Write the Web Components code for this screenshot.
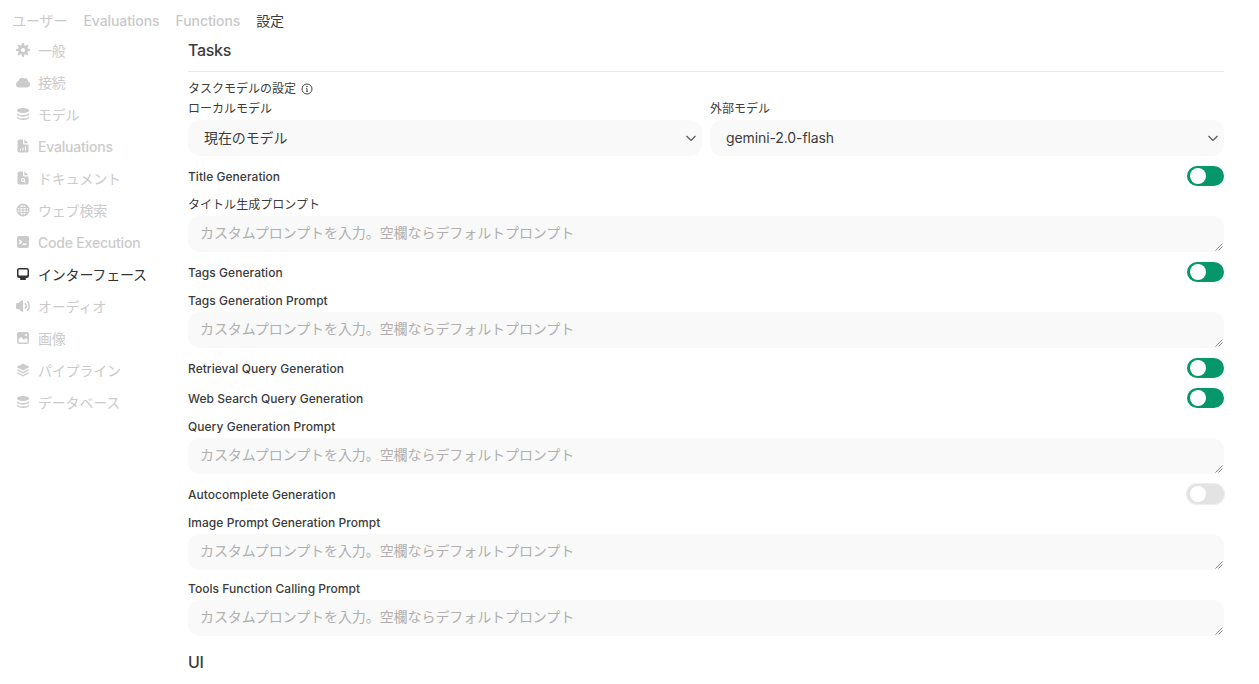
<!DOCTYPE html>
<html lang="ja">
<head>
<meta charset="utf-8">
<title>設定</title>
<style>
    html, body {
        margin: 0;
        height: 100%;
        overflow: hidden;
        background: #fff;
        color: #333;
        font-family: Inter, "Noto Sans CJK JP", sans-serif;
    }
</style>
</head>
<body>
<settings-page></settings-page>
<script>
const FONT_STACK = 'Inter, "Noto Sans CJK JP", sans-serif';
const PLACEHOLDER = 'カスタムプロンプトを入力。空欄ならデフォルトプロンプト';

// Sidebar icons, all on a 16x16 box
const ICONS = {
    cog: '<path fill-rule="evenodd" d="M6.955 1.45A.5.5 0 0 1 7.452 1h1.096a.5.5 0 0 1 .497.45l.17 1.699c.484.12.94.312 1.356.562l1.321-1.081a.5.5 0 0 1 .67.033l.774.775a.5.5 0 0 1 .034.67l-1.08 1.32c.25.417.44.873.561 1.357l1.699.17a.5.5 0 0 1 .45.497v1.096a.5.5 0 0 1-.45.497l-1.699.17c-.12.484-.312.94-.562 1.356l1.082 1.322a.5.5 0 0 1-.034.67l-.774.774a.5.5 0 0 1-.67.033l-1.322-1.08c-.416.25-.872.44-1.356.561l-.17 1.699a.5.5 0 0 1-.497.45H7.452a.5.5 0 0 1-.497-.45l-.17-1.699a4.973 4.973 0 0 1-1.356-.562L4.108 13.37a.5.5 0 0 1-.67-.033l-.774-.775a.5.5 0 0 1-.034-.67l1.08-1.32a4.971 4.971 0 0 1-.561-1.357l-1.699-.17A.5.5 0 0 1 1 8.548V7.452a.5.5 0 0 1 .45-.497l1.699-.17c.12-.484.312-.94.562-1.356L2.629 4.107a.5.5 0 0 1 .034-.67l.774-.774a.5.5 0 0 1 .67-.033L5.43 3.71a4.97 4.97 0 0 1 1.356-.561l.17-1.699ZM6 8c0 .538.212 1.026.558 1.385l.057.057a2 2 0 0 0 2.828-2.828l-.058-.056A2 2 0 0 0 6 8Z"/>',
    cloud: '<path d="M1 10.2A3.3 3.3 0 0 0 4.3 13.5h7.6a3.1 3.1 0 0 0 1.2-6 2.9 2.9 0 0 0-3.7-3.1A3.8 3.8 0 0 0 3.5 7 3.3 3.3 0 0 0 1 10.2Z"/>',
    stack: '<path d="M8 7c3.314 0 6-1.12 6-2.5S11.314 2 8 2 2 3.12 2 4.5 4.686 7 8 7Z"/><path d="M14 6.4C14 7.8 11.3 9 8 9S2 7.8 2 6.4V8c0 1.4 2.7 2.5 6 2.5s6-1.1 6-2.5V6.4Z"/><path d="M14 9.9c0 1.4-2.7 2.6-6 2.6s-6-1.2-6-2.6v1.6C2 12.900 4.700 14 8 14s6-1.100 6-2.500V9.900Z"/>',
    docChart: '<path fill-rule="evenodd" d="M4 1.5A1.5 1.5 0 0 0 2.500 3v10A1.500 1.500 0 0 0 4 14.500h8a1.500 1.500 0 0 0 1.500-1.500V6.500H9.500A1.500 1.500 0 0 1 8 5V1.500H4ZM5 11h1v1.500H5V11Zm2.500-1.500h1v3h-1v-3Zm2.500-1h1v4h-1v-4Z"/><path d="M9.250 1.500v3.500c0 .14.11.25.25.25h4L9.250 1.500Z"/>',
    docSearch: '<path fill-rule="evenodd" d="M4 1.500A1.500 1.500 0 0 0 2.500 3v10A1.500 1.500 0 0 0 4 14.500h8a1.500 1.500 0 0 0 1.500-1.500V6.500H9.500A1.500 1.500 0 0 1 8 5V1.500H4ZM8 8a2 2 0 0 1 1.650 3.130l1.100 1.100-.7.7-1.100-1.100A2 2 0 1 1 8 8Zm0 1a1 1 0 1 0 0 2 1 1 0 0 0 0-2Z"/><path d="M9.250 1.500v3.500c0 .14.11.25.25.25h4L9.250 1.500Z"/>',
    globe: '<path fill-rule="evenodd" d="M8 1.500a6.500 6.500 0 1 0 0 13 6.500 6.500 0 0 0 0-13ZM7.400 3v2H5.300c.45-1.100 1.200-1.850 2.100-2Zm1.200 0c.9.150 1.650.900 2.100 2H8.600V3ZM3 7.400c.05-.5.200-.95.400-1.300h.9c-.07.400-.12.850-.14 1.300H3Zm2.300 0c.02-.450.070-.900.160-1.300H7.400v1.300H5.300Zm3.300 0V6.100h1.940c.09.400.14.850.16 1.300H8.600Zm3.240 0c-.02-.450-.070-.900-.14-1.300h.9c.2.350.35.800.4 1.300h-1.160ZM3 8.600h1.160c.02.450.070.900.14 1.300h-.9c-.2-.350-.35-.800-.4-1.300Zm2.300 0h2.100v1.300H5.460c-.09-.400-.14-.850-.16-1.300Zm3.300 0h2.100c-.02.450-.070.900-.16 1.300H8.600V8.600Zm3.240 0H13c-.05.500-.2.950-.4 1.300h-.9c.07-.400.120-.850.140-1.300ZM5.300 11h2.100v2c-.9-.150-1.650-.900-2.100-2Zm3.300 0h2.100c-.450 1.100-1.200 1.850-2.100 2v-2Z"/>',
    terminal: '<path fill-rule="evenodd" d="M2 4a2 2 0 0 1 2-2h8a2 2 0 0 1 2 2v8a2 2 0 0 1-2 2H4a2 2 0 0 1-2-2V4Zm2.220 1.970a.75.75 0 0 0 0 1.060L5.190 8l-.97.970a.75.750 0 1 0 1.060 1.060l1.500-1.500a.75.75 0 0 0 0-1.060l-1.500-1.500a.75.75 0 0 0-1.060 0ZM8.250 9.500a.75.75 0 0 0 0 1.500h2.500a.75.75 0 0 0 0-1.500h-2.500Z"/>',
    desktop: '<path fill-rule="evenodd" d="M2 4.250A2.250 2.250 0 0 1 4.250 2h7.500A2.250 2.250 0 0 1 14 4.250v5.500A2.250 2.250 0 0 1 11.750 12h-1.312c.1.128.21.248.328.36a.75.75 0 0 1 .234.545v.345a.75.75 0 0 1-.75.75h-4.500a.75.75 0 0 1-.75-.75v-.345a.75.75 0 0 1 .234-.545c.118-.111.228-.232.328-.36H4.250A2.250 2.250 0 0 1 2 9.750v-5.500Zm2.250-.75a.75.75 0 0 0-.75.75v4.500c0 .414.336.75.75.75h7.500a.75.75 0 0 0 .75-.75v-4.500a.75.75 0 0 0-.75-.75h-7.500Z"/>',
    speaker: '<path d="M7.557 2.066A.75.75 0 0 1 8 2.750v10.500a.75.75 0 0 1-1.248.560L3.590 11H2a1 1 0 0 1-1-1V6a1 1 0 0 1 1-1h1.590l3.162-2.810a.75.75 0 0 1 .805-.124Z"/><path d="M12.950 3.050a.75.75 0 1 0-1.060 1.060 5.500 5.500 0 0 1 0 7.780.75.75 0 1 0 1.060 1.060 7 7 0 0 0 0-9.900Z"/><path d="M10.828 5.172a.75.75 0 1 0-1.060 1.060 2.500 2.500 0 0 1 0 3.536.75.75 0 1 0 1.060 1.060 4 4 0 0 0 0-5.656Z"/>',
    photo: '<path fill-rule="evenodd" d="M2 4a2 2 0 0 1 2-2h8a2 2 0 0 1 2 2v8a2 2 0 0 1-2 2H4a2 2 0 0 1-2-2V4Zm10.500 5.707a.5.5 0 0 0-.146-.353l-1-1a.5.5 0 0 0-.708 0L9.354 9.646a.5.5 0 0 1-.708 0L6.354 7.354a.5.5 0 0 0-.708 0l-2 2a.5.5 0 0 0-.146.353V12a.5.5 0 0 0 .5.5h8a.5.5 0 0 0 .5-.5V9.707ZM12 5a1 1 0 1 1-2 0 1 1 0 0 1 2 0Z"/>',
    layers: '<path d="M8 1.500 14.500 5 8 8.500 1.500 5 8 1.500Z"/><path d="M1.500 8 3 7.200l5 2.700 5-2.700 1.500.8L8 11.500 1.500 8Z"/><path d="M1.500 11 3 10.200l5 2.700 5-2.700 1.500.8L8 14.500 1.500 11Z"/>'
};

const NAV_ITEMS = [
    ['cog', '一般'],
    ['cloud', '接続'],
    ['stack', 'モデル'],
    ['docChart', 'Evaluations'],
    ['docSearch', 'ドキュメント'],
    ['globe', 'ウェブ検索'],
    ['terminal', 'Code Execution'],
    ['desktop', 'インターフェース', true],
    ['speaker', 'オーディオ'],
    ['photo', '画像'],
    ['layers', 'パイプライン'],
    ['stack', 'データベース']
];

/**
 * Base class: puts the given html into an open shadow root
 */
class ShadowElement extends HTMLElement {
    render(html) {
        const shadow = this.shadowRoot || this.attachShadow({mode: "open"});
        shadow.innerHTML = html;
    }

    // Japanese labels look better at regular weight than at medium
    get isJapanese() {
        return /[^\x00-\x7f]/.test(this.textContent);
    }
}

/** One tab in the top bar */
class TabLink extends ShadowElement {
    connectedCallback() {
        this.render(`
            <style>
                :host {
                    display: block;
                    font-size: 14px;
                    font-weight: ${this.isJapanese ? 400 : 500};
                    letter-spacing: -0.08px;
                    line-height: 20px;
                    color: #c9c9c9;
                }
                :host([active]) { color: #3a3a3a; }
            </style>
            <slot></slot>
        `);
    }
}

/** One row of the left navigation */
class NavItem extends ShadowElement {
    connectedCallback() {
        const icon = ICONS[this.getAttribute('icon')];
        this.render(`
            <style>
                :host {
                    display: flex;
                    align-items: center;
                    gap: 7px;
                    height: 32px;
                    font-size: 14px;
                    font-weight: ${this.isJapanese ? 400 : 500};
                    letter-spacing: -0.2px;
                    color: #cbcbcb;
                }
                :host([active]) { color: #333; }
                svg { width: 16px; height: 16px; flex: none; fill: currentColor; }
            </style>
            <svg viewBox="0 0 16 16">${icon}</svg>
            <slot></slot>
        `);
    }
}

/** Grey dropdown look-alike with a chevron */
class ModelSelect extends ShadowElement {
    connectedCallback() {
        this.render(`
            <style>
                :host {
                    display: flex;
                    flex-direction: column;
                    gap: 3px;
                    min-width: 0;
                }
                .label { padding-top: 1px; font-size: 12px; line-height: 16px; color: #3c3c3c; }
                .box {
                    display: flex;
                    align-items: center;
                    justify-content: space-between;
                    height: 36px;
                    padding: 0 5px 0 16px;
                    box-sizing: border-box;
                    border-radius: 12px;
                    background: #f9f9f9;
                    font-size: 14px;
                    letter-spacing: -0.1px;
                    color: #3c3c3c;
                }
                span { margin-bottom: 2px; }
                svg { width: 12px; height: 12px; fill: none; stroke: #555; stroke-width: 1.2; }
            </style>
            <div class="label">${this.getAttribute('label')}</div>
            <div class="box">
                <span><slot></slot></span>
                <svg viewBox="0 0 12 12"><path d="M1.500 4 6 8.500 10.500 4"/></svg>
            </div>
        `);
    }
}

/** Label on the left, switch on the right */
class ToggleRow extends ShadowElement {
    connectedCallback() {
        this.render(`
            <style>
                :host {
                    display: flex;
                    align-items: center;
                    justify-content: space-between;
                    height: 20px;
                    font-size: 12px;
                    font-weight: 500;
                    letter-spacing: 0.04px;
                    color: #3c3c3c;
                }
                .switch {
                    display: flex;
                    width: 37px;
                    height: 20px;
                    padding: 2px 3px;
                    box-sizing: border-box;
                    border-radius: 10px;
                    background: #059669;
                }
                :host([off]) .switch { background: #e3e3e3; box-shadow: 0 0 0 1px #eee; }
                .knob { width: 16px; height: 16px; border-radius: 50%; background: #fff; }
            </style>
            <span><slot></slot></span>
            <div class="switch"><div class="knob"></div></div>
        `);
    }
}

/** Label with a prompt textarea look-alike under it */
class PromptField extends ShadowElement {
    connectedCallback() {
        this.render(`
            <style>
                :host {
                    display: flex;
                    flex-direction: column;
                    gap: 3px;
                }
                :host([tight]) { margin-top: -1px; }
                .label {
                    padding-top: 1px;
                    font-size: 12px;
                    line-height: 16px;
                    font-weight: ${this.isJapanese ? 400 : 500};
                    letter-spacing: 0.04px;
                    color: #3c3c3c;
                }
                :host([tight]) .label { padding-top: 2px; }
                .box {
                    position: relative;
                    height: 36px;
                    padding: 7px 12px;
                    box-sizing: border-box;
                    border-radius: 12px;
                    background: #f9f9f9;
                    font-size: 14px;
                    letter-spacing: -0.08px;
                    line-height: 20px;
                    color: #b0b0b0;
                }
                /* Resize grip sits over the corner of the box */
                svg {
                    position: absolute;
                    right: 1px;
                    bottom: 1px;
                    width: 8px;
                    height: 8px;
                    fill: none;
                    stroke: #888;
                    stroke-width: 1;
                }
            </style>
            <div class="label"><slot></slot></div>
            <div class="box">
                ${PLACEHOLDER}
                <svg viewBox="0 0 8 8"><path d="M0.500 7.500 7.500 0.500M3.500 7.500 7.500 3.500"/></svg>
            </div>
        `);
    }
}

/** Main settings panel with all the task rows */
class TasksPanel extends ShadowElement {
    connectedCallback() {
        this.render(`
            <style>
                :host {
                    display: flex;
                    flex-direction: column;
                    gap: 10px;
                    padding: 3px 35px 0 0;
                    min-width: 0;
                }
                h2 { margin: 0; font-size: 16px; line-height: 24px; font-weight: 500; letter-spacing: -0.3px; color: #3c3c3c; }
                hr { margin: -1px 0 -2px; border: 0; border-top: 1px solid #e8e8e8; }
                .info {
                    display: flex;
                    align-items: center;
                    gap: 5px;
                    padding-top: 1px;
                    font-size: 12px;
                    line-height: 16px;
                    color: #3c3c3c;
                    margin-bottom: -7px;
                }
                .info svg { width: 12px; height: 12px; fill: none; stroke: #444; stroke-width: 1; }
                .models { display: grid; grid-template-columns: 1fr 1fr; gap: 8px; }
                .ui { margin-top: 4px; }
            </style>
            <h2>Tasks</h2>
            <hr>
            <div class="info">
                タスクモデルの設定
                <svg viewBox="0 0 12 12"><circle cx="6" cy="6" r="5"/><path d="M5.200 5.400H6v3M5.200 8.400h1.600"/><circle cx="6" cy="3.600" r=".4"/></svg>
            </div>
            <div class="models">
                <model-select label="ローカルモデル">現在のモデル</model-select>
                <model-select label="外部モデル">gemini-2.0-flash</model-select>
            </div>
            <toggle-row>Title Generation</toggle-row>
            <prompt-field tight>タイトル生成プロンプト</prompt-field>
            <toggle-row>Tags Generation</toggle-row>
            <prompt-field>Tags Generation Prompt</prompt-field>
            <toggle-row>Retrieval Query Generation</toggle-row>
            <toggle-row>Web Search Query Generation</toggle-row>
            <prompt-field>Query Generation Prompt</prompt-field>
            <toggle-row off>Autocomplete Generation</toggle-row>
            <prompt-field>Image Prompt Generation Prompt</prompt-field>
            <prompt-field>Tools Function Calling Prompt</prompt-field>
            <h2 class="ui">UI</h2>
        `);
    }
}

/** Whole page: tabs on top, navigation left, panel right */
class SettingsPage extends ShadowElement {
    connectedCallback() {
        const nav = NAV_ITEMS.map(([icon, label, active]) =>
            `<nav-item icon="${icon}" ${active ? 'active' : ''}>${label}</nav-item>`).join('');
        this.render(`
            <style>
                :host {
                    display: block;
                    font-family: ${FONT_STACK};
                    height: 684px;
                    overflow: hidden;
                }
                .tabs {
                    display: flex;
                    gap: 16px;
                    height: 35px;
                    padding: 11px 0 0 12px;
                    box-sizing: border-box;
                }
                .body { display: grid; grid-template-columns: 188px 1fr; }
                .side { margin-top: -1px; padding-left: 15px; }
            </style>
            <div class="tabs">
                <tab-link>ユーザー</tab-link>
                <tab-link>Evaluations</tab-link>
                <tab-link>Functions</tab-link>
                <tab-link active>設定</tab-link>
            </div>
            <div class="body">
                <div class="side">${nav}</div>
                <tasks-panel></tasks-panel>
            </div>
        `);
    }
}

customElements.define('tab-link', TabLink);
customElements.define('nav-item', NavItem);
customElements.define('model-select', ModelSelect);
customElements.define('toggle-row', ToggleRow);
customElements.define('prompt-field', PromptField);
customElements.define('tasks-panel', TasksPanel);
customElements.define('settings-page', SettingsPage);
</script>
</body>
</html>
